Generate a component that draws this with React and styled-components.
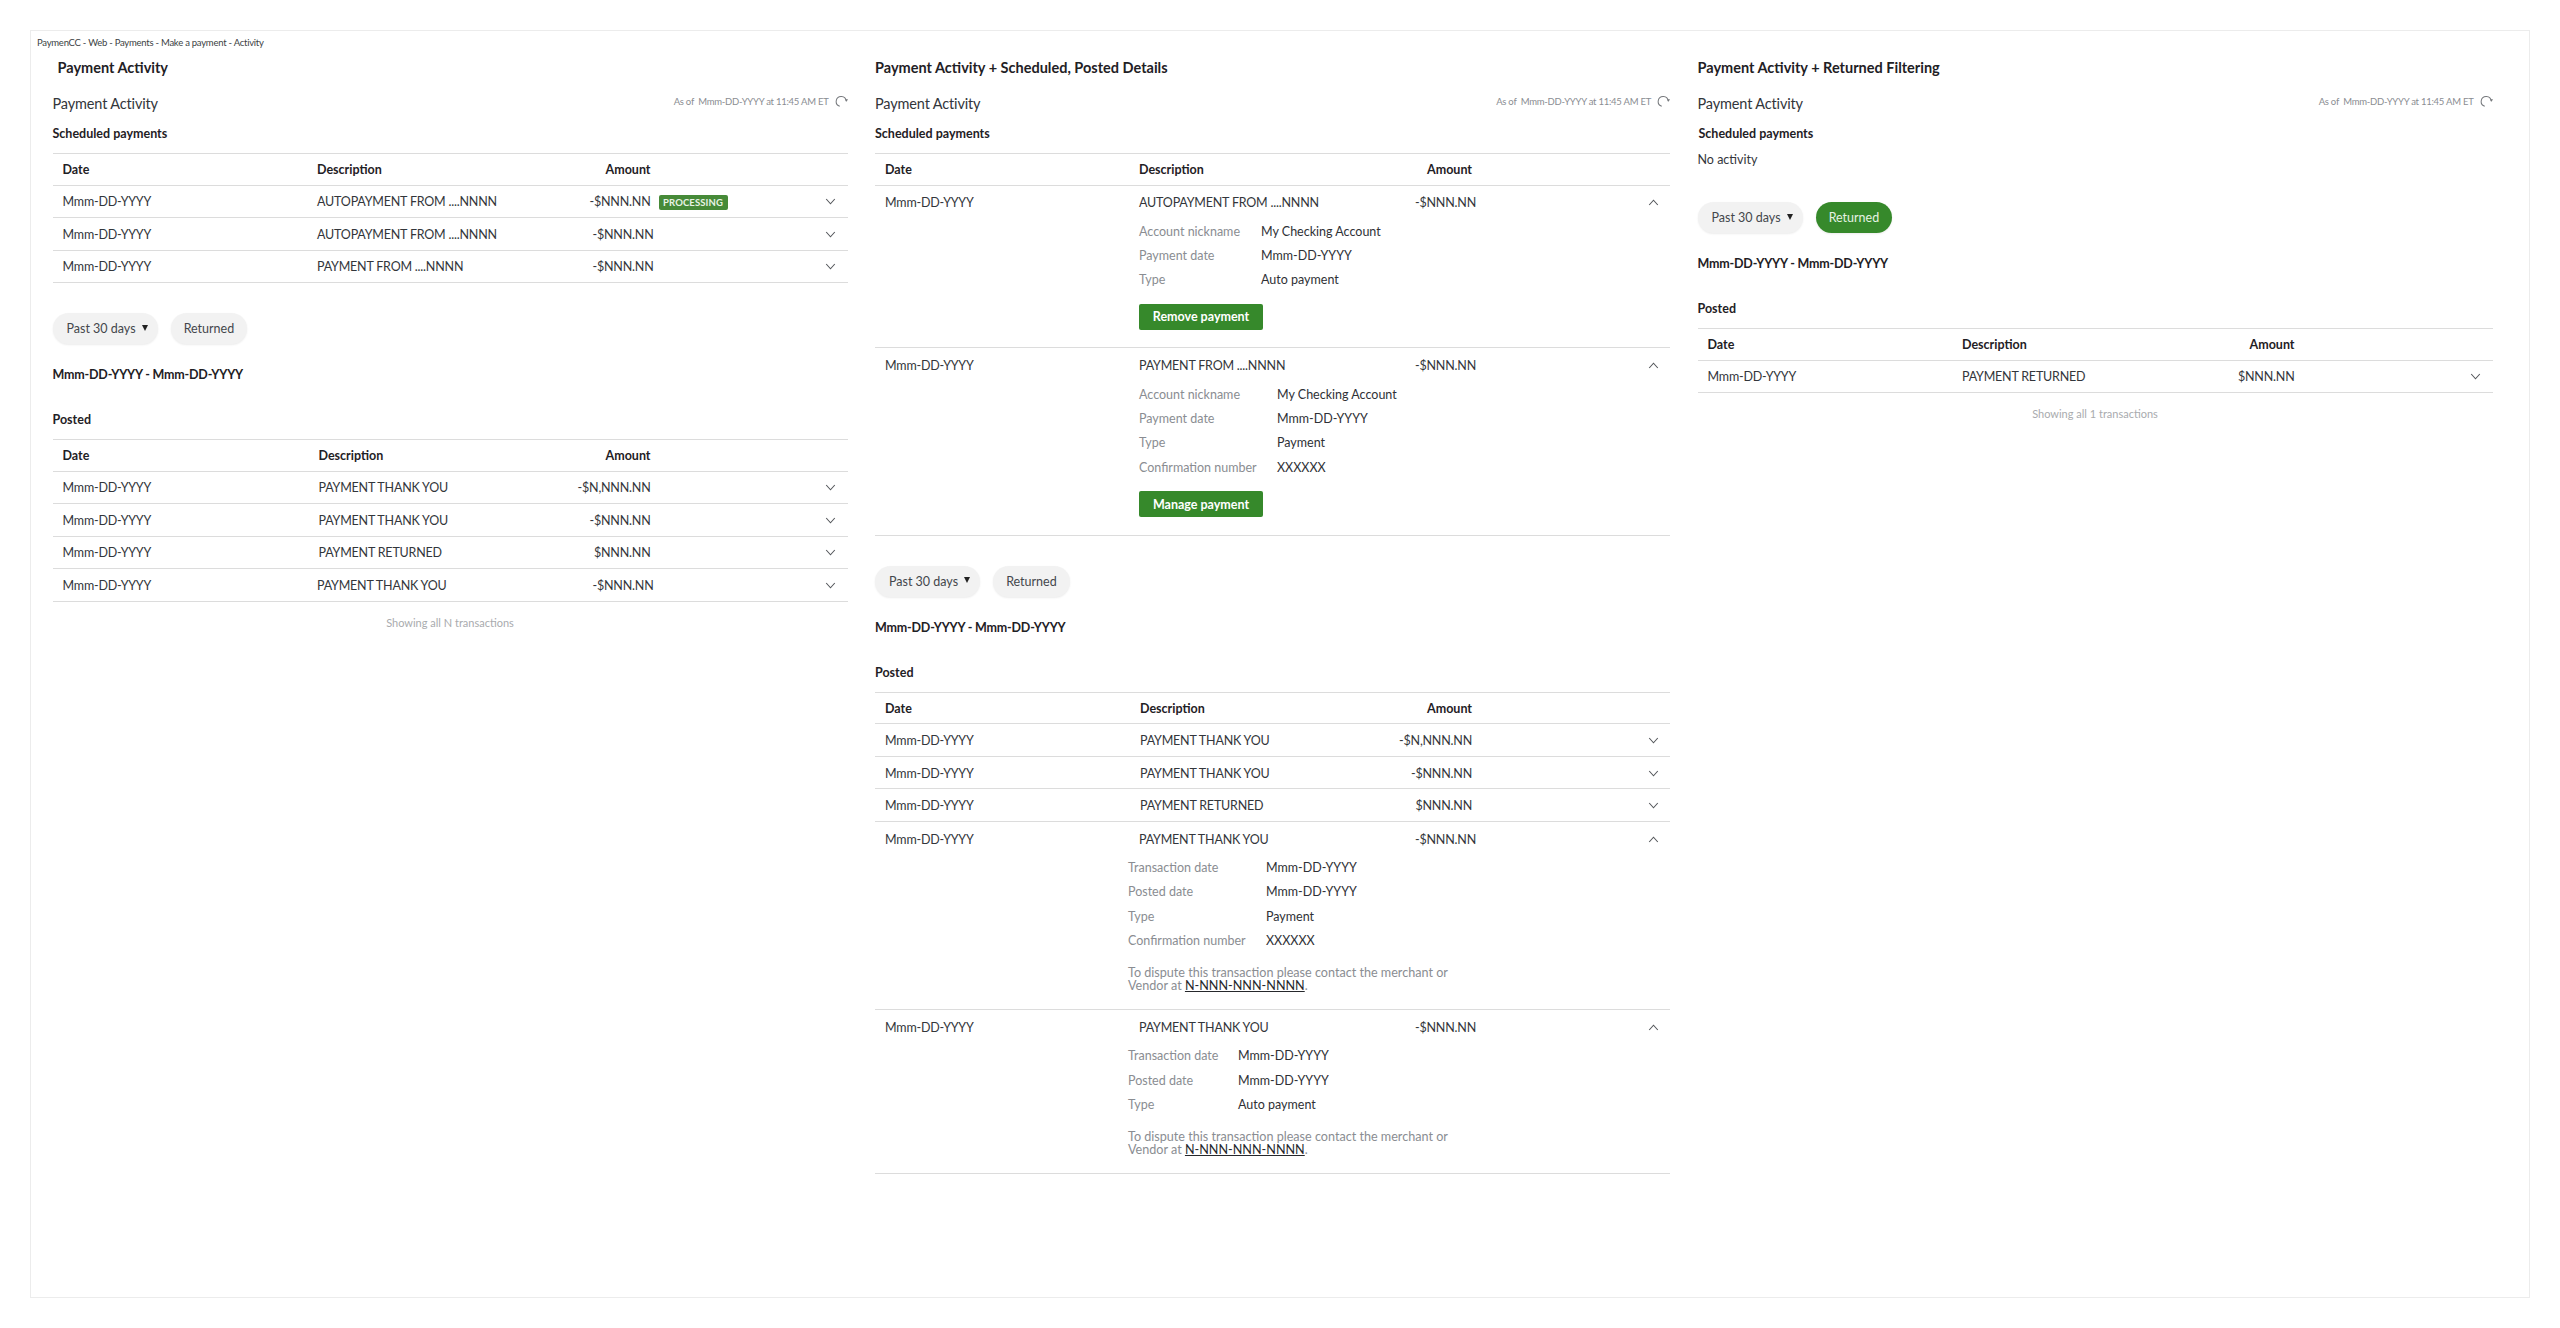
import React from 'react'
import styled, { createGlobalStyle } from 'styled-components'

const GlobalStyle = createGlobalStyle`
  html, body {
    margin: 0;
    background: #fff;
    font-family: Lato, "Liberation Sans", sans-serif;
    color: #2f3136;
  }
`

const Page = styled.div`
  box-sizing: border-box;
  width: 2560px;
  height: 1328px;
  padding: 30px;
`

const Frame = styled.div`
  box-sizing: border-box;
  width: 2500px;
  height: 1268px;
  border: 1px solid #ececec;
  padding: 5px 0 0 6px;
`

const Breadcrumb = styled.div`
  height: 14px;
  line-height: 14px;
  font-size: 9.5px;
  letter-spacing: -0.25px;
  color: #3c3f44;
`

const Columns = styled.div`
  display: flex;
  gap: 27.5px;
  margin-top: 8px;
  padding-left: 15.5px;
`

const Column = styled.section`
  width: 795px;
`

const Title = styled.h2`
  margin: 0 0 0 ${p => p.$indent || 0}px;
  height: 20px;
  line-height: 20px;
  font-size: 14.5px;
  font-weight: 700;
  color: #1f2125;
`

const ActivityHead = styled.div`
  display: flex;
  align-items: center;
  justify-content: space-between;
  margin-top: 15px;
  height: 20px;
`

const ActivityName = styled.div`
  font-size: 14.5px;
  letter-spacing: -0.15px;
  color: #33363b;
`

const AsOf = styled.div`
  display: flex;
  align-items: center;
  gap: 6px;
  margin-bottom: 3px;
  font-size: 9.5px;
  letter-spacing: -0.25px;
  color: #8a8d92;
  white-space: pre;
`

const SectionName = styled.h3`
  margin: 10px 0 0 ${p => p.$indent || 0}px;
  height: 20px;
  line-height: 22px;
  font-size: 12.5px;
  font-weight: 700;
  color: #1f2125;
`

const Table = styled.div`
  margin-top: ${p => p.$top ?? 10}px;
  border-top: 1px solid #dcdcdc;
`

const Row = styled.div`
  box-sizing: border-box;
  display: grid;
  grid-template-columns: ${p => p.$desc}px 200px ${p => p.$end - p.$desc - 200}px 1fr 34px;
  align-items: center;
  height: ${p => (p.$open ? 33.5 : 32.5)}px;
  padding-top: 1px;
  font-size: 12.5px;
  letter-spacing: -0.2px;
  color: #33363b;
  border-bottom: ${p => (p.$open ? 'none' : '1px solid #dcdcdc')};
`

const HeadRow = styled(Row)`
  height: 31.5px;
  font-weight: 700;
  color: #1f2125;
  letter-spacing: 0;
`

const DateCell = styled.div`
  padding-left: 10px;
`

const AmountCell = styled.div`
  text-align: right;
  white-space: nowrap;
`

const Extra = styled.div`
  padding-left: 8px;
`

const Badge = styled.span`
  display: inline-block;
  box-sizing: border-box;
  width: 69px;
  height: 15px;
  line-height: 15px;
  border-radius: 2px;
  background: #468a38;
  color: #e9f3e6;
  font-size: 9.5px;
  font-weight: 700;
  text-align: center;
  letter-spacing: 0.1px;
`

const Toggle = styled.div`
  display: flex;
  align-items: center;
  justify-content: center;
`

const Details = styled.div`
  padding: 0 0 ${p => p.$bottom}px ${p => p.$indent}px;
  border-bottom: 1px solid #dcdcdc;
`

const DetailLine = styled.div`
  display: grid;
  grid-template-columns: ${p => p.$label}px 1fr;
  align-items: center;
  height: 24.33px;
  font-size: 12.5px;
  color: #2f3136;
`

const DetailLabel = styled.div`
  color: #8a8d92;
`

const ActionButton = styled.button`
  display: block;
  box-sizing: border-box;
  width: 124px;
  height: 26px;
  margin-top: 12px;
  padding: 0;
  border: none;
  border-radius: 2px;
  background: #36892b;
  color: #fff;
  font-family: inherit;
  font-size: 12.5px;
  font-weight: 700;
`

const Dispute = styled.p`
  margin: 13px 0 0;
  font-size: 12.6px;
  line-height: 13.3px;
  color: #8a8d92;
`

const Phone = styled.span`
  color: #26282c;
  text-decoration: underline;
`

const NoActivity = styled.div`
  margin-top: 7px;
  height: 20px;
  line-height: 20px;
  font-size: 12.5px;
  color: #33363b;
`

const Chips = styled.div`
  display: flex;
  gap: 13px;
  margin-top: ${p => p.$top}px;
`

const Chip = styled.div`
  display: flex;
  align-items: center;
  gap: 6px;
  box-sizing: border-box;
  height: 31px;
  padding: 0 ${p => p.$right ?? 13}px 0 ${p => p.$left ?? 13}px;
  border-radius: 16px;
  font-size: 12.5px;
  background: ${p => (p.$active ? '#36892b' : '#f2f2f2')};
  color: ${p => (p.$active ? '#e6f2e3' : '#44474c')};
  box-shadow: 0 1px 2px rgba(0, 0, 0, 0.08);
`

const Caret = styled.span`
  width: 0;
  height: 0;
  border-left: 3.5px solid transparent;
  border-right: 3.5px solid transparent;
  border-top: 6px solid #222;
  margin-bottom: 2px;
`

const RangeLabel = styled.div`
  margin-top: 20px;
  height: 20px;
  line-height: 21px;
  font-size: 12.5px;
  letter-spacing: -0.2px;
  font-weight: 700;
  color: #1f2125;
`

const PostedLabel = styled.div`
  margin-top: 25px;
  height: 20px;
  line-height: 21px;
  font-size: 12.5px;
  font-weight: 700;
  color: #1f2125;
`

const Footnote = styled.div`
  margin-top: 14px;
  line-height: 14px;
  font-size: 11px;
  text-align: center;
  color: #a9abae;
`

function Chevron({ up }) {
  return (
    <svg width="11" height="7" viewBox="0 0 11 7" fill="none" stroke="#55585c" strokeWidth="1.1">
      <path d={up ? 'M1.2 6 L5.5 1.2 L9.8 6' : 'M1.2 1 L5.5 5.8 L9.8 1'} />
    </svg>
  )
}

function RefreshIcon() {
  return (
    <svg width="13" height="13" viewBox="0 0 13 13" fill="none">
      <path d="M10.8 4.6 A5 5 0 1 0 6.5 11.6" stroke="#75787c" strokeWidth="1" transform="rotate(20 6.5 6.5)" />
      <path d="M10 4.2 L13 4.2 L11.5 6.8 Z" fill="#75787c" />
    </svg>
  )
}

function Header({ layout }) {
  return (
    <HeadRow {...layout}>
      <DateCell>Date</DateCell>
      <div>Description</div>
      <AmountCell>Amount</AmountCell>
      <div />
      <div />
    </HeadRow>
  )
}

function TxRow({ desc, amount, end, descAt, badge, open, date = 'Mmm-DD-YYYY' }) {
  return (
    <Row $desc={descAt} $end={end} $open={open}>
      <DateCell>{date}</DateCell>
      <div>{desc}</div>
      <AmountCell>{amount}</AmountCell>
      <Extra>{badge && <Badge>PROCESSING</Badge>}</Extra>
      <Toggle>
        <Chevron up={open} />
      </Toggle>
    </Row>
  )
}

function DetailBlock({ lines, label, indent, bottom, children }) {
  return (
    <Details $indent={indent} $bottom={bottom}>
      {lines.map(([name, value]) => (
        <DetailLine key={name} $label={label}>
          <DetailLabel>{name}</DetailLabel>
          <div>{value}</div>
        </DetailLine>
      ))}
      {children}
    </Details>
  )
}

function DisputeNote() {
  return (
    <Dispute>
      To dispute this transaction please contact the merchant or
      <br />
      Vendor at <Phone>N-NNN-NNN-NNNN</Phone>.
    </Dispute>
  )
}

function ActivityHeader() {
  return (
    <ActivityHead>
      <ActivityName>Payment Activity</ActivityName>
      <AsOf>
        As of  Mmm-DD-YYYY at 11:45 AM ET
        <RefreshIcon />
      </AsOf>
    </ActivityHead>
  )
}

function Filters({ top, active }) {
  return (
    <>
      <Chips $top={top}>
        <Chip $left={14} $right={10}>
          Past 30 days <Caret />
        </Chip>
        <Chip $active={active}>Returned</Chip>
      </Chips>
      <RangeLabel>Mmm-DD-YYYY - Mmm-DD-YYYY</RangeLabel>
      <PostedLabel>Posted</PostedLabel>
    </>
  )
}

export default function App() {
  return (
    <Page>
      <GlobalStyle />
      <Frame>
        <Breadcrumb>PaymenCC - Web - Payments - Make a payment - Activity</Breadcrumb>
        <Columns>
          <Column>
            <Title $indent={5}>Payment Activity</Title>
            <ActivityHeader />
            <SectionName>Scheduled payments</SectionName>
            <Table>
              <Header layout={{ $desc: 264.5, $end: 598 }} />
              <TxRow descAt={264.5} end={598} desc="AUTOPAYMENT FROM ....NNNN" amount="-$NNN.NN" badge />
              <TxRow descAt={264.5} end={601} desc="AUTOPAYMENT FROM ....NNNN" amount="-$NNN.NN" />
              <TxRow descAt={264.5} end={601} desc="PAYMENT FROM ....NNNN" amount="-$NNN.NN" />
            </Table>
            <Filters top={30} />
            <Table>
              <Header layout={{ $desc: 266, $end: 598 }} />
              <TxRow descAt={266} end={598} desc="PAYMENT THANK YOU" amount="-$N,NNN.NN" />
              <TxRow descAt={266} end={598} desc="PAYMENT THANK YOU" amount="-$NNN.NN" />
              <TxRow descAt={266} end={598} desc="PAYMENT RETURNED" amount="$NNN.NN" />
              <TxRow descAt={264.5} end={601} desc="PAYMENT THANK YOU" amount="-$NNN.NN" />
            </Table>
            <Footnote>Showing all N transactions</Footnote>
          </Column>

          <Column>
            <Title>Payment Activity + Scheduled, Posted Details</Title>
            <ActivityHeader />
            <SectionName>Scheduled payments</SectionName>
            <Table>
              <Header layout={{ $desc: 264, $end: 597 }} />
              <TxRow open descAt={264} end={601} desc="AUTOPAYMENT FROM ....NNNN" amount="-$NNN.NN" />
              <DetailBlock
                indent={264}
                label={122}
                bottom={17.5}
                lines={[
                  ['Account nickname', 'My Checking Account'],
                  ['Payment date', 'Mmm-DD-YYYY'],
                  ['Type', 'Auto payment'],
                ]}
              >
                <ActionButton>Remove payment</ActionButton>
              </DetailBlock>
              <TxRow open descAt={264} end={601} desc="PAYMENT FROM ....NNNN" amount="-$NNN.NN" />
              <DetailBlock
                indent={264}
                label={138}
                bottom={17.5}
                lines={[
                  ['Account nickname', 'My Checking Account'],
                  ['Payment date', 'Mmm-DD-YYYY'],
                  ['Type', 'Payment'],
                  ['Confirmation number', 'XXXXXX'],
                ]}
              >
                <ActionButton>Manage payment</ActionButton>
              </DetailBlock>
            </Table>
            <Filters top={30} />
            <Table>
              <Header layout={{ $desc: 265, $end: 597 }} />
              <TxRow descAt={265} end={597} desc="PAYMENT THANK YOU" amount="-$N,NNN.NN" />
              <TxRow descAt={265} end={597} desc="PAYMENT THANK YOU" amount="-$NNN.NN" />
              <TxRow descAt={265} end={597} desc="PAYMENT RETURNED" amount="$NNN.NN" />
              <TxRow open descAt={264} end={601} desc="PAYMENT THANK YOU" amount="-$NNN.NN" />
              <DetailBlock
                indent={253}
                label={138}
                bottom={17}
                lines={[
                  ['Transaction date', 'Mmm-DD-YYYY'],
                  ['Posted date', 'Mmm-DD-YYYY'],
                  ['Type', 'Payment'],
                  ['Confirmation number', 'XXXXXX'],
                ]}
              >
                <DisputeNote />
              </DetailBlock>
              <TxRow open descAt={264} end={601} desc="PAYMENT THANK YOU" amount="-$NNN.NN" />
              <DetailBlock
                indent={253}
                label={110}
                bottom={17}
                lines={[
                  ['Transaction date', 'Mmm-DD-YYYY'],
                  ['Posted date', 'Mmm-DD-YYYY'],
                  ['Type', 'Auto payment'],
                ]}
              >
                <DisputeNote />
              </DetailBlock>
            </Table>
          </Column>

          <Column>
            <Title>Payment Activity + Returned Filtering</Title>
            <ActivityHeader />
            <SectionName $indent={1}>Scheduled payments</SectionName>
            <NoActivity>No activity</NoActivity>
            <Filters top={32} active />
            <Table>
              <Header layout={{ $desc: 264.5, $end: 597 }} />
              <TxRow descAt={264.5} end={597} desc="PAYMENT RETURNED" amount="$NNN.NN" />
            </Table>
            <Footnote>Showing all 1 transactions</Footnote>
          </Column>
        </Columns>
      </Frame>
    </Page>
  )
}
